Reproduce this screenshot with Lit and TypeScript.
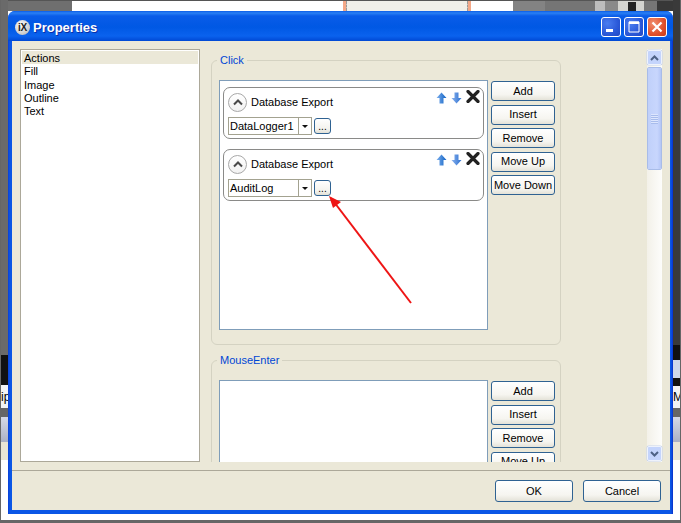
import { LitElement, html, css, svg } from "lit";
import { customElement } from "lit/decorators.js";

const BTNS = ["Add", "Insert", "Remove", "Move Up", "Move Down"];
const ITEMS = ["Actions", "Fill", "Image", "Outline", "Text"];

const upArrow = svg`<svg class="arr" width="11" height="12" viewBox="0 0 11 12"><defs><linearGradient id="ua" x1="0" x2="1" y1="0" y2="0"><stop offset="0" stop-color="#7fb0ee"/><stop offset="1" stop-color="#0f62c4"/></linearGradient></defs><path d="M5.5 .5 10.5 6H7.5V11.5H3.5V6H.5Z" fill="url(#ua)"/></svg>`;
const downArrow = svg`<svg class="arr" width="11" height="12" viewBox="0 0 11 12"><defs><linearGradient id="da" x1="0" x2="1" y1="0" y2="0"><stop offset="0" stop-color="#8ab2ee"/><stop offset="1" stop-color="#2c70d0"/></linearGradient></defs><path d="M5.5 11.5 10.5 6H7.5V.5H3.5V6H.5Z" fill="url(#da)"/></svg>`;
const closeX = svg`<svg class="x" width="14" height="13" viewBox="0 0 14 13"><path d="M2 1.5 12 11.5M12 1.5 2 11.5" stroke="#222" stroke-width="3.2" stroke-linecap="round" fill="none"/></svg>`;
const chevUp = svg`<svg width="10" height="7" viewBox="0 0 10 7"><path d="M1 5.5 5 1.5 9 5.5" stroke="#4a4a4a" stroke-width="2" fill="none"/></svg>`;

@customElement("app-root")
export class AppRoot extends LitElement {
  static styles = css`
    :host { display: block; position: relative; width: 681px; height: 523px; overflow: hidden; background: #fff;
      font: 11px "Liberation Sans", Arial, sans-serif; color: #000; }
    * { box-sizing: border-box; }
    .desk { position: absolute; }
    .top { left: 0; top: 0; width: 681px; height: 11px; display: flex; border-top: 1px solid #555; }
    .top span { display: block; height: 100%; }
    .t1 { width: 72px; background: #6f6f6f; }
    .t2 { width: 271px; background: #fff; }
    .t3 { width: 3px; background: #f4a888; }
    .t4 { width: 122px; background: #f0efe9; border-left: 1px dashed #999; border-right: 1px dashed #999; }
    .t6 { width: 42px; background: #fff; }
    .t7 { width: 32px; background: #838383; }
    .t8 { width: 50px; background: #757575; }
    .t9 { width: 10px; background: #bdbdbd; }
    .t10 { width: 13px; background: #8a8a8a; }
    .t11 { width: 26px; background: linear-gradient(#222, #222) 10px 1px / 8px 9px no-repeat, #d4d4d0; }
    .t12 { width: 13px; background: #767676; }
    .t13 { flex: 1; background: #383838; }
    .side { top: 0; width: 8px; height: 523px; background:
      linear-gradient(#fff, #fff) 0 460px / 100% 63px no-repeat,
      linear-gradient(#e9e5d5, #e9e5d5) 0 442px / 100% 18px no-repeat,
      linear-gradient(#d5d9e6, #aab0c4) 0 417px / 100% 25px no-repeat,
      linear-gradient(#666, #666) 0 408px / 100% 9px no-repeat,
      linear-gradient(#f4f4f4, #f4f4f4) 0 385px / 100% 23px no-repeat,
      linear-gradient(#111, #111) 0 355px / 100% 30px no-repeat,
      #6a6a6a; }
    .sl { left: 0; border-left: 1px solid #666; }
    .sr { left: 673px; border-right: 1px solid #666; background:
      linear-gradient(#fff, #fff) 0 460px / 100% 63px no-repeat,
      linear-gradient(#e9e5d5, #e9e5d5) 0 442px / 100% 18px no-repeat,
      linear-gradient(#d5d9e6, #aab0c4) 0 417px / 100% 25px no-repeat,
      linear-gradient(#666, #666) 0 408px / 100% 9px no-repeat,
      linear-gradient(#f4f4f4, #f4f4f4) 0 386px / 100% 22px no-repeat,
      linear-gradient(#111, #111) 0 378px / 100% 8px no-repeat,
      linear-gradient(#cfd8ea, #cfd8ea) 0 360px / 100% 18px no-repeat,
      linear-gradient(#111, #111) 0 345px / 100% 15px no-repeat,
      #3a3a3a; }
    .bot { left: 0; top: 520px; width: 681px; height: 3px; background: #666; }
    .stub { position: absolute; top: 390px; font-size: 12px; }
    .ip { left: 1px; width: 7px; overflow: hidden; }
    .mm { left: 673px; width: 7px; overflow: hidden; }

    .stage { position: relative; display: flex; padding: 11px 0 0 8px; height: 523px; }
    .win { width: 665px; height: 503px; display: flex; flex-direction: column; border-radius: 7px 7px 0 0;
      background: linear-gradient(90deg, #0a3fd8, #0a56e6 2px, #0a56e6 663px, #0a2fc8); overflow: hidden; }
    .title { height: 30px; flex: none; display: flex; align-items: center; padding: 2px 6px 0 7px;
      background: linear-gradient(#0a5ce8, #2a80f4 2px, #0a5ce8 5px, #0058e4 16px, #0a62ee 25px, #0048d4 30px); }
    .logo { width: 15px; height: 15px; border-radius: 50%; flex: none; display: flex; align-items: center; justify-content: center;
      background: radial-gradient(circle at 40% 35%, #fff, #c8c8c8 70%, #777); color: #222; font: bold 10px "Liberation Sans", sans-serif; letter-spacing: -.3px; }
    .ttext { margin-left: 3px; flex: 1; color: #fff; font: bold 13px "Liberation Sans", sans-serif; text-shadow: 1px 1px 0 #0a2fa8; }
    .cap { display: flex; gap: 3px; }
    .cb { width: 20px; height: 20px; border: 1px solid #fff; border-radius: 3px; position: relative;
      background: radial-gradient(circle at 30% 30%, #4a7df0, #2a58d8 60%, #2048c4); }
    .cb.close { background: radial-gradient(circle at 30% 30%, #f09070, #e0502c 60%, #c83a18); }
    .cb svg { display: block; }

    .client { flex: 1; margin: 0 3px 4px 4px; background: #ebe8d8; display: flex; flex-direction: column; min-height: 0; }
    .main { flex: 1; min-height: 0; display: flex; padding: 8px 9px 8px 8px; }
    .list { width: 180px; height: 413px; flex: none; background: #fff; border: 1px solid #aca899; padding: 1px; }
    .li { height: 13.33px; line-height: 15px; padding-left: 2px; }
    .li.sel { background: #ebe8d8; }
    .view { width: 436px; margin-left: 11px; height: 413px; overflow: hidden; flex: none; padding-top: 4px; }
    fieldset { margin: 0 0 8px; padding: 13px 6px 14px 7px; width: 350px; border: 1px solid #d4d2c2; border-radius: 6px; display: flex; gap: 3px; min-inline-size: 0; }
    legend { padding: 0 3px; margin-left: -2px; color: #0046d5; font-size: 11px; line-height: 14px; }
    .panel { width: 269px; height: 250px; background: #fff; border: 1px solid #7f9db9; padding: 6px 3px; display: flex; flex-direction: column; gap: 10px; flex: none; }
    .side-btns { display: flex; flex-direction: column; gap: 3.5px; padding-top: 1px; }
    .btn { width: 64px; height: 20px; display: flex; align-items: center; justify-content: center; border: 1.5px solid #2f6292; border-radius: 3px; padding-bottom: 1px;
      background: linear-gradient(#fff, #f6f5f0 70%, #e4e2d8); font-size: 11px; white-space: nowrap; color: #000; }
    .card { height: 52px; border: 1.5px solid #8a8a88; border-radius: 7px; padding: 4px 4px; }
    .r1 { display: flex; align-items: center; height: 21px; }
    .circ { width: 19px; height: 19px; border-radius: 50%; border: 1.5px solid #a8a8a8; display: flex; align-items: center; justify-content: center; background: linear-gradient(#fff, #f2f2f2); flex: none; }
    .ctitle { margin-left: 4px; flex: 1; padding-bottom: 1px; }
    .tools { display: flex; align-items: flex-start; align-self: flex-start; gap: 4px; margin-right: -1px; margin-top: -1px; }
    .arr { margin-top: 1px; }
    .x { margin-top: -1px; }
    .r2 { display: flex; align-items: center; gap: 2px; margin-top: 4px; }
    .combo { width: 84px; height: 18px; border: 1px solid #a3a290; display: flex; background: #fff; }
    .cval { flex: 1; line-height: 16px; padding-left: 1px; }
    .carr { width: 13px; border-left: 1px solid #a3a290; display: flex; align-items: center; justify-content: center; }
    .carr i { display: block; width: 0; height: 0; border: 3px solid transparent; border-top: 3.5px solid #111; border-bottom: 0; }
    .dots { width: 17px; height: 16px; border: 1.5px solid #2f6292; border-radius: 3px; background: linear-gradient(#fff, #f4f3ee 70%, #e2e0d6); text-align: center; font-size: 10px; line-height: 15px; }

    .sb { width: 15px; flex: none; margin-left: 0; height: 413px; display: flex; flex-direction: column;
      background: linear-gradient(90deg, #f3f1e9, #fdfdfb); padding: 1px 0; }
    .sbtn { width: 15px; height: 15px; flex: none; background: #c4d4fc; border: 1px solid #eef2fc; border-radius: 2px; display: flex; align-items: center; justify-content: center; box-shadow: 0 0 0 .5px #c8d4ec; }
    .thumb { margin-top: 2px; height: 103px; width: 15px; flex: none; background: linear-gradient(90deg, #c0d0fa, #c8d6fd 70%, #b4c6f6); border: 1px solid #fff; outline: 1px solid #a8bce8; outline-offset: -1px; border-radius: 2px; display: flex; align-items: center; justify-content: center; }
    .grip { width: 7px; height: 10px; background: repeating-linear-gradient(#dde6fe 0 1px, #a8bcec 1px 2px); }
    .sp { flex: 1; }

    .foot { height: 40px; flex: none; border-top: 1px solid #aca899; display: flex; justify-content: flex-end; gap: 10px; padding: 9px 9px 0 0; }
    .foot .btn { width: 78px; height: 22px; font-size: 11px; }
    .red { position: absolute; left: 320px; top: 190px; }
  `;

  private card(val: string) {
    return html`<div class="card">
      <div class="r1"><div class="circ">${chevUp}</div><div class="ctitle">Database Export</div>
        <div class="tools">${upArrow}${downArrow}${closeX}</div></div>
      <div class="r2"><div class="combo"><div class="cval">${val}</div><div class="carr"><i></i></div></div><div class="dots">...</div></div>
    </div>`;
  }

  private group(name: string, vals: string[], btns: string[]) {
    return html`<fieldset><legend>${name}</legend>
      <div class="panel">${vals.map((v) => this.card(v))}</div>
      <div class="side-btns">${btns.map((b) => html`<div class="btn">${b}</div>`)}</div>
    </fieldset>`;
  }

  render() {
    return html`
      <div class="desk top"><span class="t1"></span><span class="t2"></span><span class="t3"></span><span class="t4"></span><span class="t3"></span><span class="t6"></span><span class="t7"></span><span class="t8"></span><span class="t9"></span><span class="t10"></span><span class="t11"></span><span class="t12"></span><span class="t13"></span></div>
      <div class="desk side sl"></div>
      <div class="desk side sr"></div>
      <div class="desk bot"></div>
      <span class="stub ip">ip</span><span class="stub mm">M</span>
      <div class="stage">
        <div class="win">
          <div class="title">
            <div class="logo">iX</div>
            <div class="ttext">Properties</div>
            <div class="cap">
              <div class="cb"><svg width="18" height="18" viewBox="0 0 18 18"><rect x="4" y="11" width="7" height="3" fill="#fff"/></svg></div>
              <div class="cb"><svg width="18" height="18" viewBox="0 0 18 18"><path d="M4 4H14V14H4Z" fill="none" stroke="#fff" stroke-width="1"/><rect x="4" y="3.5" width="10" height="2.5" fill="#fff"/></svg></div>
              <div class="cb close"><svg width="18" height="18" viewBox="0 0 18 18"><path d="M4.5 4.5 13.5 13.5M13.5 4.5 4.5 13.5" stroke="#fff" stroke-width="2.2" fill="none"/></svg></div>
            </div>
          </div>
          <div class="client">
            <div class="main">
              <div class="list">${ITEMS.map((t, i) => html`<div class="li ${i === 0 ? "sel" : ""}">${t}</div>`)}</div>
              <div class="view">
                ${this.group("Click", ["DataLogger1", "AuditLog"], BTNS)}
                ${this.group("MouseEnter", [], BTNS.slice(0, 4))}
              </div>
              <div class="sb">
                <div class="sbtn"><svg width="9" height="6" viewBox="0 0 9 6"><path d="M1 5 4.5 1.5 8 5" stroke="#4d6185" stroke-width="2" fill="none"/></svg></div>
                <div class="thumb"><div class="grip"></div></div>
                <div class="sp"></div>
                <div class="sbtn"><svg width="9" height="6" viewBox="0 0 9 6"><path d="M1 1 4.5 4.5 8 1" stroke="#4d6185" stroke-width="2" fill="none"/></svg></div>
              </div>
            </div>
            <div class="foot"><div class="btn">OK</div><div class="btn">Cancel</div></div>
          </div>
        </div>
      </div>
      <svg class="red" width="100" height="120" viewBox="320 190 100 120"><path d="M411 303 331 198" stroke="#ee1515" stroke-width="2" fill="none"/><path d="M329 196 341 202 333 208Z" fill="#ee1515"/></svg>
    `;
  }
}
